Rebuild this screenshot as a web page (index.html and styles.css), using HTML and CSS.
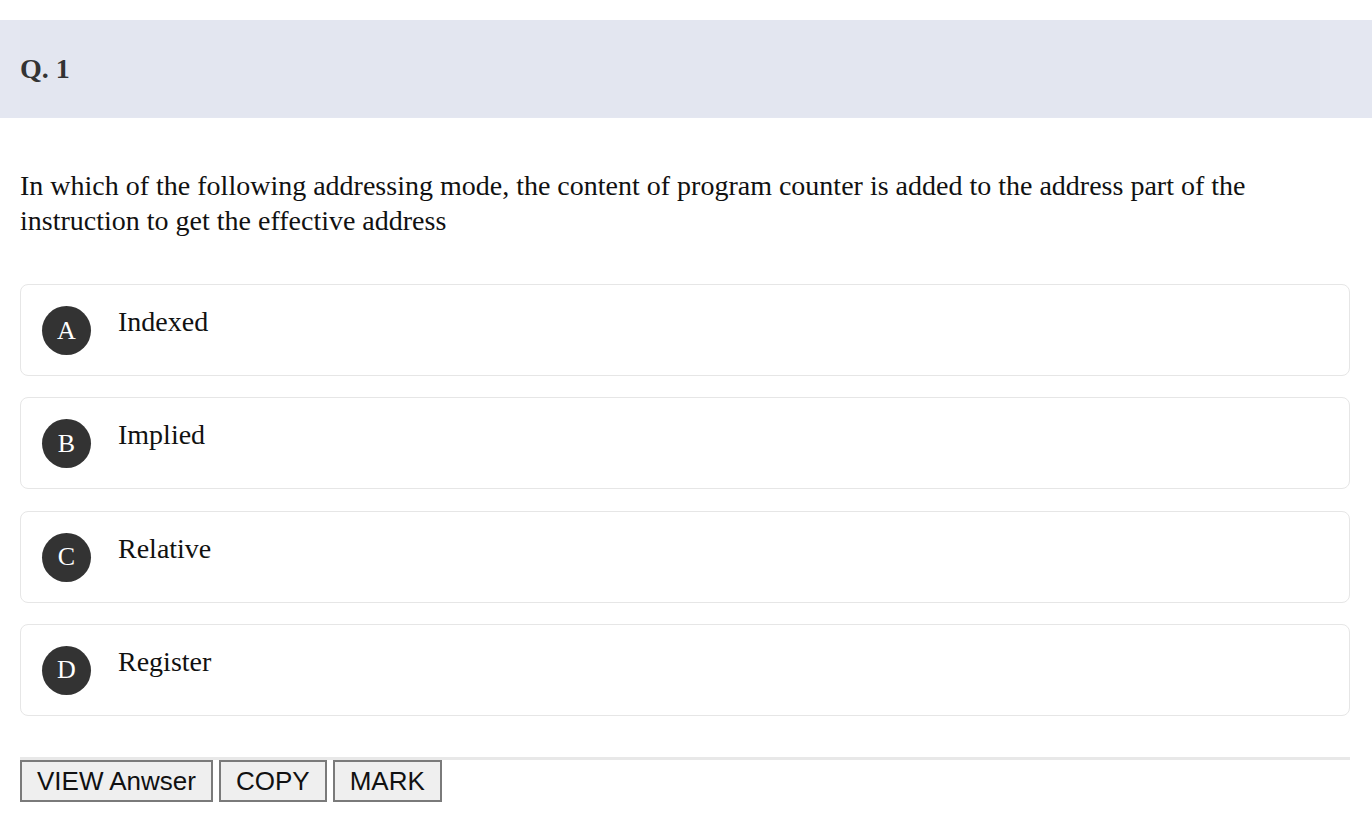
FILE: index.html
```html
<!DOCTYPE html>
<html>
<head>
<meta charset="utf-8">
<link rel="stylesheet" href="styles.css">
</head>
<body>
<div class="band">
  <div class="band-inner"><h2 class="qno">Q. 1</h2></div>
</div>
<main class="content">
  <p class="question">In which of the following addressing mode, the content of program counter is added to the address part of the instruction to get the effective address</p>
  <div class="options">
    <div class="option"><span class="badge">A</span><span class="opt-text">Indexed</span></div>
    <div class="option"><span class="badge">B</span><span class="opt-text">Implied</span></div>
    <div class="option"><span class="badge">C</span><span class="opt-text">Relative</span></div>
    <div class="option"><span class="badge">D</span><span class="opt-text">Register</span></div>
  </div>
  <div class="actions">
    <button class="btn">VIEW Anwser</button>
    <button class="btn">COPY</button>
    <button class="btn">MARK</button>
  </div>
</main>
</body>
</html>
```
FILE: styles.css
```css
html, body {
  margin: 0;
  padding: 0;
  background: #fff;
}
body {
  font-family: "Liberation Serif", "Times New Roman", serif;
  color: #111;
}
.band {
  margin-top: 20px;
  height: 98px;
  background: #e4e7f1;
}
.band-inner {
  margin-left: 20px;
  width: 1300px;
  height: 97px;
  background: #e3e6f0;
  display: flex;
  align-items: center;
}
.qno {
  margin: 0;
  font-size: 28px;
  font-weight: bold;
  color: #333;
}
.content {
  margin: 0 22px 0 20px;
}
.question {
  margin: 50px 0 46px;
  font-size: 28px;
  line-height: 35px;
}
.options {
  display: flex;
  flex-direction: column;
  gap: 21.3px;
}
.option {
  display: flex;
  align-items: flex-start;
  border: 1px solid #e6e6e6;
  border-radius: 8px;
  padding: 21px 21px;
  height: 48px;
}
.badge {
  flex: none;
  width: 49px;
  height: 49px;
  border-radius: 50%;
  background: #333;
  color: #fff;
  display: flex;
  align-items: center;
  justify-content: center;
  font-size: 26px;
  line-height: 1;
}
.opt-text {
  margin-left: 27px;
  margin-top: -2px;
  font-size: 28px;
  line-height: 35px;
}
.actions {
  margin-top: 41px;
  border-top: 3px solid #e8e8e8;
  display: flex;
  gap: 6px;
}
.btn {
  font-family: "Liberation Sans", Arial, sans-serif;
  font-size: 26px;
  color: #111;
  background: #efefef;
  border: 2px solid #7a7a7a;
  border-radius: 0;
  padding: 3px 15px;
  height: 42px;
  line-height: 30px;
}
```
